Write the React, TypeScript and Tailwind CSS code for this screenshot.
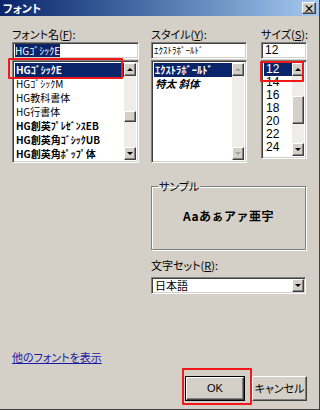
import React from "react";

const FONT = "font-['MS_UI_Gothic','Noto_Sans_CJK_JP',sans-serif] [font-feature-settings:'palt']";
const LATIN = "font-['Liberation_Sans',sans-serif]";
const raised =
  "bg-[#d4d0c8] border border-t-white border-l-white border-r-[#404040] border-b-[#404040] shadow-[inset_-1px_-1px_0_#808080]";
const sunken =
  "bg-white border border-t-[#808080] border-l-[#808080] border-r-white border-b-white shadow-[inset_1px_1px_0_#404040,inset_-1px_-1px_0_#d4d0c8]";

function Arrow({ up, disabled }: { up?: boolean; disabled?: boolean }) {
  const color = disabled ? "border-b-[#a0a0a0] border-t-[#a0a0a0]" : "border-b-black border-t-black";
  return (
    <div className={`w-[12px] h-[13px] flex items-center justify-center ${raised}`}>
      {up ? (
        <div className={`w-0 h-0 border-l-[3px] border-r-[3px] border-b-[3px] border-l-transparent border-r-transparent ${color}`} />
      ) : (
        <div className={`w-0 h-0 border-l-[3px] border-r-[3px] border-t-[3px] border-l-transparent border-r-transparent ${color}`} />
      )}
    </div>
  );
}

function ScrollBar({ thumbTop, thumbH, disabled }: { thumbTop?: number; thumbH?: number; disabled?: boolean }) {
  return (
    <div className="w-[12px] flex flex-col bg-[#eeede9]">
      <Arrow up disabled={disabled} />
      <div className="flex-1 relative">
        {thumbH ? (
          <div className={`absolute left-0 w-[12px] ${raised}`} style={{ top: thumbTop, height: thumbH }} />
        ) : null}
      </div>
      <Arrow disabled={disabled} />
    </div>
  );
}

function ListBox({
  items,
  height,
  scroll,
  row = "h-[14px] leading-[14px]",
}: {
  items: { label: string; cls?: string }[];
  height: string;
  scroll: React.ReactNode;
  row?: string;
}) {
  return (
    <div className={`mt-[1px] ${height} flex p-[2px] ${sunken}`}>
      <div className="flex-1 min-w-0 overflow-hidden">
        {items.map((it, i) => (
          <div
            key={i}
            className={`${row} pl-[1px] whitespace-nowrap ${
              i === 0 ? "bg-[#0a246a] text-white" : "text-black"
            } ${it.cls ?? "text-[10px]"}`}
          >
            {it.label}
          </div>
        ))}
      </div>
      {scroll}
    </div>
  );
}

function Label({ text, key1, rest }: { text: string; key1: string; rest: string }) {
  return (
    <div className="h-[15px] leading-[15px] text-[11px] text-black whitespace-nowrap">
      {text}(<span className="underline">{key1}</span>){rest}
    </div>
  );
}

export default function App() {
  const fonts = [
    { label: "HGｺﾞｼｯｸE", cls: "text-[10px] font-bold" },
    { label: "HGｺﾞｼｯｸM", cls: "text-[10px] text-[#555]" },
    { label: "HG教科書体", cls: "text-[10px]" },
    { label: "HG行書体", cls: "text-[10px]" },
    { label: "HG創英ﾌﾟﾚｾﾞﾝｽEB", cls: "text-[10px] font-bold" },
    { label: "HG創英角ｺﾞｼｯｸUB", cls: "text-[10px] font-bold" },
    { label: "HG創英角ﾎﾟｯﾌﾟ体", cls: "text-[10px] font-bold" },
  ];
  const styles = [
    { label: "ｴｸｽﾄﾗﾎﾞｰﾙﾄﾞ", cls: "text-[10.5px] font-bold" },
    { label: "特太 斜体", cls: "text-[10.5px] font-bold italic" },
  ];
  const sizes = ["12", "14", "16", "18", "20", "22", "24"].map((s) => ({
    label: s,
    cls: `text-[12px] pl-[2px] ${LATIN}`,
  }));

  return (
    <div className={`relative w-[320px] h-[410px] bg-[#d4d0c8] flex flex-col border-r border-b border-[#404040] overflow-hidden ${FONT}`}>
      {/* title bar */}
      <div className="h-[16px] bg-gradient-to-r from-[#0a246a] to-[#a6caf0] flex items-center justify-between pl-[3px] pr-[3px]">
        <span className="text-white text-[11px] font-bold leading-[16px]">フォント</span>
        <div className={`w-[14px] h-[12px] flex items-center justify-center text-[11px] leading-none font-bold text-black ${raised}`}>
          ×
        </div>
      </div>

      <div className="flex flex-col pl-[12px] pt-[11px]">
        <div className="flex">
          <div className="w-[127px] flex flex-col">
            <Label text="フォント名" key1="F" rest=":" />
            <div className={`h-[17px] flex items-center px-[2px] overflow-hidden ${sunken}`}>
              <span className="bg-[#0a246a] text-white text-[10px] leading-[13px] whitespace-nowrap">HGｺﾞｼｯｸE</span>
            </div>
            <ListBox items={fonts} height="h-[103px]" scroll={<ScrollBar thumbTop={35} thumbH={11} />} />
          </div>

          <div className="w-[96px] ml-[12px] flex flex-col">
            <Label text="スタイル" key1="Y" rest=":" />
            <div className={`h-[17px] flex items-center px-[2px] overflow-hidden ${sunken}`}>
              <span className="text-black text-[9px] leading-[13px] whitespace-nowrap">ｴｸｽﾄﾗﾎﾞｰﾙﾄﾞ</span>
            </div>
            <ListBox items={styles} height="h-[103px]" scroll={<ScrollBar disabled />} />
          </div>

          <div className="w-[46px] ml-[14px] flex flex-col">
            <Label text="サイズ" key1="S" rest=":" />
            <div className={`h-[17px] flex items-center px-[3px] overflow-hidden ${sunken}`}>
              <span className={`text-black text-[12px] leading-[13px] ${LATIN}`}>12</span>
            </div>
            <ListBox
              items={sizes}
              height="h-[99px]"
              row="h-[13px] leading-[13px]"
              scroll={<ScrollBar thumbTop={20} thumbH={28} />}
            />
          </div>
        </div>

        <div className="ml-[139px] w-[155px] flex flex-col mt-[16px]">
          <fieldset className="border border-[#808080] shadow-[1px_1px_0_white,inset_1px_1px_0_white] h-[71px] m-0 p-0">
            <legend className="ml-[6px] px-[1px] text-[11px] leading-[14px] text-black">サンプル</legend>
            <div className="flex justify-center pt-[16px] text-[12px] leading-[14px] font-bold text-black tracking-[0.5px] [font-feature-settings:normal]">
              Aaあぁアァ亜宇
            </div>
          </fieldset>

          <div className="mt-[8px]">
            <Label text="文字セット" key1="R" rest=":" />
          </div>
          <div className={`mt-[4px] h-[17px] flex items-center pl-[3px] pr-[1px] ${sunken}`}>
            <span className="flex-1 text-[11px] leading-[13px] text-black">日本語</span>
            <div className={`w-[12px] h-[13px] flex items-center justify-center ${raised}`}>
              <div className="w-0 h-0 border-l-[3px] border-r-[3px] border-t-[3px] border-l-transparent border-r-transparent border-t-black" />
            </div>
          </div>
        </div>

        <div className="mt-[56px] h-[14px] leading-[14px] text-[11px] text-[#1a1aa6] underline">他のフォントを表示</div>

        <div className="mt-[12px] flex justify-end pr-[12px]">
          <div className="w-[60px] h-[25px] border border-black">
            <div className={`w-full h-full flex items-center justify-center text-[11px] text-black ${LATIN} ${raised}`}>OK</div>
          </div>
          <div className={`ml-[7px] w-[55px] h-[25px] flex items-center justify-center text-[11px] whitespace-nowrap text-black ${raised}`}>
            キャンセル
          </div>
        </div>
      </div>

      {/* red annotation boxes */}
      <div className="absolute left-[8px] top-[58px] w-[115px] h-[21px] border-2 border-[#f01818] rounded-[1px]" />
      <div className="absolute left-[260px] top-[61px] w-[44px] h-[21px] border-2 border-[#f01818] rounded-[1px]" />
      <div className="absolute left-[182px] top-[368px] w-[70px] h-[37px] border-2 border-[#f01818] rounded-[1px]" />
    </div>
  );
}
